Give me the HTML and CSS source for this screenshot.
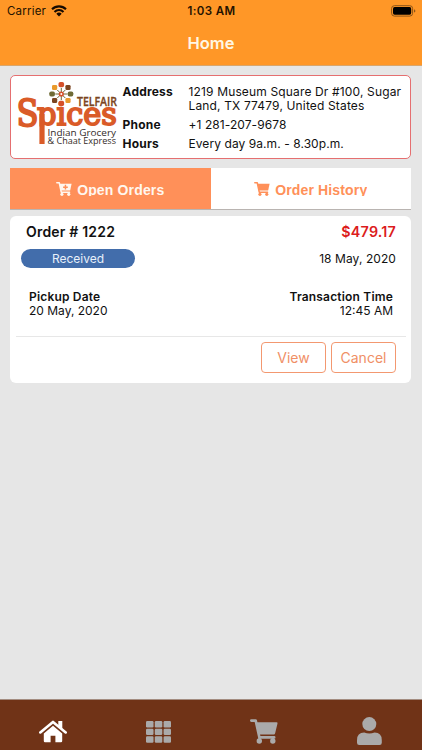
FILE: index.html
```html
<!DOCTYPE html>
<html lang="en">
<head>
    <meta charset="UTF-8">
    <meta name="viewport" content="width=device-width, initial-scale=1.0">
    <title>Home</title>
    <link rel="stylesheet" href="styles.css">
</head>
<body>
    <header class="header">
        <div class="status-bar">
            <div class="carrier">
                <span>Carrier</span>
                <svg class="wifi" viewBox="0 0 16 12">
                    <path d="M1 4.2a10 10 0 0 1 14 0M3.5 6.9a6.4 6.4 0 0 1 9 0" fill="none" stroke="#160a00" stroke-width="2.1"/>
                    <path d="M8 11.6 5.3 8.8a3.9 3.9 0 0 1 5.4 0z" fill="#160a00"/>
                </svg>
            </div>
            <span class="clock">1:03 AM</span>
            <svg class="battery" viewBox="0 0 25 12">
                <rect x=".6" y=".7" width="21" height="10.4" rx="2.8" fill="none" stroke="#8c5418"/>
                <rect x="2" y="2.1" width="18.2" height="7.6" rx="1.6" fill="#000"/>
                <path d="M23 4.2q1.4.5 1.4 1.7T23 7.6z" fill="#8c5418"/>
            </svg>
        </div>
        <h1 class="title">Home</h1>
    </header>

    <main class="content">
        <section class="store">
            <svg class="logo" viewBox="0 0 104 70">
                <clipPath id="baseline">
                    <rect x="0" y="10" width="104" height="36.5"/>
                </clipPath>
                <text class="logo-s" x="0.5" y="45.8" textLength="22" lengthAdjust="spacingAndGlyphs">S</text>
                <g clip-path="url(#baseline)">
                    <text class="logo-name" x="21" y="45.4" textLength="80" lengthAdjust="spacingAndGlyphs">pices</text>
                </g>
                <rect x="23.4" y="34" width="5.2" height="30" fill="#da5b28"/>
                <g transform="translate(45.3 14)">
                    <circle r="8" fill="#fff"/>
                    <rect x="-2.8" y="-12" width="5.6" height="5.2" rx="1.8" fill="#d5502a"/>
                    <rect x="-2.8" y="6.8" width="5.6" height="5.2" rx="1.8" fill="#d5502a"/>
                    <rect x="-12" y="-2.6" width="5.6" height="5.2" rx="1.8" fill="#6f6b35"/>
                    <rect x="6.4" y="-2.6" width="5.6" height="5.2" rx="1.8" fill="#6f6b35"/>
                    <rect x="-9.3" y="-9.1" width="5.2" height="5.2" rx="1.4" fill="#e99a2c"/>
                    <rect x="4.1" y="-9.1" width="5.2" height="5.2" rx="1.4" fill="#7b4520"/>
                    <rect x="-9.3" y="3.9" width="5.2" height="5.2" rx="1.4" fill="#7b4520"/>
                    <rect x="4.1" y="3.9" width="5.2" height="5.2" rx="1.4" fill="#e99a2c"/>
                    <path d="M0-6V6M-6 0H6M-4-4 4 4M4-4-4 4" stroke="#6f6b35" stroke-width="1"/>
                    <circle r="2.6" fill="#d5502a"/>
                    <circle r="1" fill="#fff"/>
                </g>
                <text class="logo-top" x="61" y="25.5" textLength="40" lengthAdjust="spacingAndGlyphs">TELFAIR</text>
                <text class="logo-sub" x="31.5" y="55.8" textLength="68.5" lengthAdjust="spacingAndGlyphs">Indian Grocery</text>
                <text class="logo-sub" x="31.5" y="64" textLength="68.5" lengthAdjust="spacingAndGlyphs">&amp; Chaat Express</text>
            </svg>
            <dl class="info">
                <dt>Address</dt>
                <dd class="address">1219 Museum Square Dr #100, Sugar<br>Land, TX 77479, United States</dd>
                <dt>Phone</dt>
                <dd>+1 281-207-9678</dd>
                <dt>Hours</dt>
                <dd>Every day 9a.m. - 8.30p.m.</dd>
            </dl>
        </section>

        <nav class="tabs">
            <button class="tab active">
                <svg class="tab-icon" viewBox="0 0 28 25">
                    <path d="M1.2 1.5h4.4l3.5 16.7h14.8" fill="none" stroke="#fff7ef" stroke-width="2.8" stroke-linejoin="round" stroke-linecap="round"/>
                    <path d="M6 3.2h21.6L25 15.2H8.6z" fill="#fff7ef"/>
                    <circle cx="10.3" cy="22" r="2.8" fill="#fff7ef"/>
                    <circle cx="22.5" cy="22" r="2.8" fill="#fff7ef"/>
                    <path d="M16.6 5v8.4M12.4 9.2h8.4" stroke="#ff9059" stroke-width="2.6"/>
                </svg>
                <span class="tab-label">Open Orders</span>
            </button>
            <button class="tab">
                <svg class="tab-icon" viewBox="0 0 28 25">
                    <path d="M1.2 1.5h4.4l3.5 16.7h14.8" fill="none" stroke="#ff9059" stroke-width="2.8" stroke-linejoin="round" stroke-linecap="round"/>
                    <path d="M6 3.2h21.6L25 15.2H8.6z" fill="#ff9059"/>
                    <circle cx="10.3" cy="22" r="2.8" fill="#ff9059"/>
                    <circle cx="22.5" cy="22" r="2.8" fill="#ff9059"/>
                </svg>
                <span class="tab-label">Order History</span>
            </button>
        </nav>

        <section class="order">
            <div class="order-head">
                <span class="order-id">Order # 1222</span>
                <span class="price">$479.17</span>
            </div>
            <div class="order-status">
                <span class="badge">Received</span>
                <span class="order-date">18 May, 2020</span>
            </div>
            <div class="order-details">
                <div class="pickup">
                    <strong>Pickup Date</strong>
                    <span>20 May, 2020</span>
                </div>
                <div class="time">
                    <strong>Transaction Time</strong>
                    <span>12:45 AM</span>
                </div>
            </div>
            <div class="actions">
                <button class="action">View</button>
                <button class="action">Cancel</button>
            </div>
        </section>
    </main>

    <footer class="tab-bar">
        <div class="bar-item">
            <svg class="home-icon" viewBox="0 0 28 23">
                <path d="M1.3 12.4 14 1.9l12.7 10.5" fill="none" stroke="#fff" stroke-width="2.6" stroke-linecap="round" stroke-linejoin="round"/>
                <path d="M19.3 1h4v8l-4-3.3zM14 5.8l9.2 7.7V21q0 1.2-1.2 1.2h-5.6v-6.4h-4.8v6.4H6q-1.2 0-1.2-1.2v-7.5z" fill="#fff"/>
            </svg>
        </div>
        <div class="bar-item">
            <svg class="grid-icon" viewBox="0 0 25 22">
                <g fill="#aaa">
                    <rect x="0" y="0" width="7.5" height="6.4" rx="1.2"/>
                    <rect x="8.8" y="0" width="7.5" height="6.4" rx="1.2"/>
                    <rect x="17.6" y="0" width="7.4" height="6.4" rx="1.2"/>
                    <rect x="0" y="7.7" width="7.5" height="6.3" rx="1.2"/>
                    <rect x="8.8" y="7.7" width="7.5" height="6.3" rx="1.2"/>
                    <rect x="17.6" y="7.7" width="7.4" height="6.3" rx="1.2"/>
                    <rect x="0" y="15.3" width="7.5" height="6.4" rx="1.2"/>
                    <rect x="8.8" y="15.3" width="7.5" height="6.4" rx="1.2"/>
                    <rect x="17.6" y="15.3" width="7.4" height="6.4" rx="1.2"/>
                </g>
            </svg>
        </div>
        <div class="bar-item">
            <svg class="cart-icon" viewBox="0 0 28 25">
                <path d="M1.3 1.6h4.4l3.7 16.8h14.8" fill="none" stroke="#aaa" stroke-width="2.6" stroke-linejoin="round" stroke-linecap="round"/>
                <path d="M6 3.2h20.6q1.2 0 .9 1.2l-2.3 9.7q-.3 1.5-1.4 1.5H8.6z" fill="#aaa"/>
                <circle cx="9.3" cy="22" r="2.7" fill="#aaa"/>
                <circle cx="22.8" cy="22" r="2.7" fill="#aaa"/>
                <path d="M9.8 18.4 9 22M22.8 18.4V22" stroke="#aaa" stroke-width="2.4"/>
            </svg>
        </div>
        <div class="bar-item">
            <svg class="user-icon" viewBox="0 0 25 28">
                <circle cx="12.3" cy="7.1" r="7" fill="#aaa"/>
                <path d="M0 23.2q0-7.6 7.2-7.6 5.1 2 10.4 0 7.2 0 7.2 7.6v2.6q0 2.2-2.2 2.2H2.2Q0 28 0 25.8z" fill="#aaa"/>
            </svg>
        </div>
    </footer>
</body>
</html>
```
FILE: styles.css
```css
* {
    box-sizing: border-box;
}

body {
    font-family: Inter, Roboto, sans-serif;
    margin: 0;
    height: 750px;
    display: flex;
    flex-direction: column;
    background-color: #e6e6e6;
    color: #111;
    overflow: hidden;
}

svg {
    display: block;
    flex: none;
}

.header {
    height: 66px;
    background-color: #ff9727;
    border-bottom: 1px solid #d8a66d;
}

.status-bar {
    display: grid;
    grid-template-columns: 1fr auto 1fr;
    align-items: center;
    height: 22px;
    padding: 0 6px 0 7px;
    font-size: 11.5px;
    color: #241200;
}

.carrier {
    display: flex;
    align-items: center;
    gap: 5px;
    letter-spacing: 0.2px;
}

.wifi {
    width: 16px;
    height: 12px;
}

.clock {
    font-weight: 600;
    letter-spacing: 0.4px;
}

.battery {
    width: 25px;
    height: 12px;
    justify-self: end;
}

.title {
    margin: 0;
    font-size: 16.5px;
    line-height: 43px;
    font-weight: 600;
    text-align: center;
    color: #fff7e4;
}

.content {
    flex: 1;
    padding: 9px 11px 0 10px;
}

.store {
    display: flex;
    height: 84px;
    background-color: #fff;
    border: 1px solid #e56f70;
    border-radius: 5px;
    padding: 4px 5px;
}

.logo {
    width: 104px;
    height: 70px;
}

.logo-top {
    font: 600 12px "Open Sans", sans-serif;
    fill: #7b4520;
    stroke: #7b4520;
    stroke-width: 0.3px;
}

.logo-s {
    font: 38px "DejaVu Serif", serif;
    fill: #da5b28;
    stroke: #da5b28;
    stroke-width: 2px;
}

.logo-name {
    font: 32px "DejaVu Serif", serif;
    fill: #da5b28;
    stroke: #da5b28;
    stroke-width: 1.9px;
}

.logo-sub {
    font: 8.4px "Open Sans", sans-serif;
    fill: #332b28;
}

.info {
    display: grid;
    grid-template-columns: 66px 1fr;
    row-gap: 4.4px;
    align-content: start;
    margin: 4.5px 0 0 2.5px;
    font-size: 12px;
    line-height: 14.5px;
    letter-spacing: 0.07px;
    white-space: nowrap;
}

.info dt {
    font-weight: 700;
    letter-spacing: 0.2px;
}

.info dd {
    margin: 0;
}

.info .address {
    letter-spacing: 0.15px;
}

.tabs {
    display: flex;
    height: 42px;
    margin-top: 9px;
    border-bottom: 1px solid #b9b4b1;
}

.tab {
    flex: 1;
    display: flex;
    align-items: center;
    justify-content: center;
    gap: 5px;
    padding: 0;
    border: none;
    background-color: #fff;
    color: #ff9059;
    font: bold 14px "Liberation Sans", Arial, sans-serif;
}

.tab.active {
    background-color: #ff9059;
    color: #fff7ef;
}

.tab-icon {
    width: 16px;
    height: 14px;
}

.tab-label {
    height: 14px;
    line-height: 16px;
    overflow: hidden;
    letter-spacing: 0.15px;
}

.order {
    height: 167px;
    margin-top: 6px;
    padding: 6px 5px 0 6px;
    background-color: #fff;
    border-radius: 6px;
}

.order-head {
    display: flex;
    justify-content: space-between;
    padding: 0 10px;
    font-size: 14px;
    line-height: 20px;
    font-weight: 600;
    letter-spacing: 0.2px;
}

.price {
    font-size: 14.3px;
    letter-spacing: 0.2px;
    color: #dc1c1c;
}

.order-status {
    display: flex;
    justify-content: space-between;
    padding: 7px 10px 0 5px;
    font-size: 12px;
    line-height: 19px;
}

.order-date {
    letter-spacing: 0.08px;
}

.badge {
    width: 114px;
    border-radius: 10px;
    background-color: #426dab;
    color: #e8f0fa;
    text-align: center;
}

.order-details {
    display: flex;
    justify-content: space-between;
    padding: 21.5px 13px 0;
    font-size: 12px;
    line-height: 14.5px;
}

.order-details strong {
    display: block;
    font-weight: 600;
    letter-spacing: 0.18px;
}

.time {
    text-align: right;
}

.actions {
    display: flex;
    justify-content: flex-end;
    gap: 5px;
    margin-top: 17.5px;
    padding: 5px 10px 0 0;
    border-top: 1px solid #e7e7e7;
}

.action {
    width: 65px;
    height: 31px;
    padding: 0;
    border: 1px solid #f39870;
    border-radius: 4px;
    background-color: #fff;
    color: #f08f66;
    font: 14px Inter, Roboto, sans-serif;
}

.tab-bar {
    display: flex;
    height: 51px;
    background-color: #703317;
    border-top: 1px solid #a38c80;
}

.bar-item {
    flex: 1;
    display: flex;
    justify-content: center;
}

.home-icon {
    width: 28px;
    height: 23px;
    margin-top: 20px;
}

.grid-icon {
    width: 25px;
    height: 22px;
    margin-top: 21px;
}

.cart-icon {
    width: 28px;
    height: 25px;
    margin-top: 19px;
}

.user-icon {
    width: 25px;
    height: 28px;
    margin-top: 17px;
}
```
